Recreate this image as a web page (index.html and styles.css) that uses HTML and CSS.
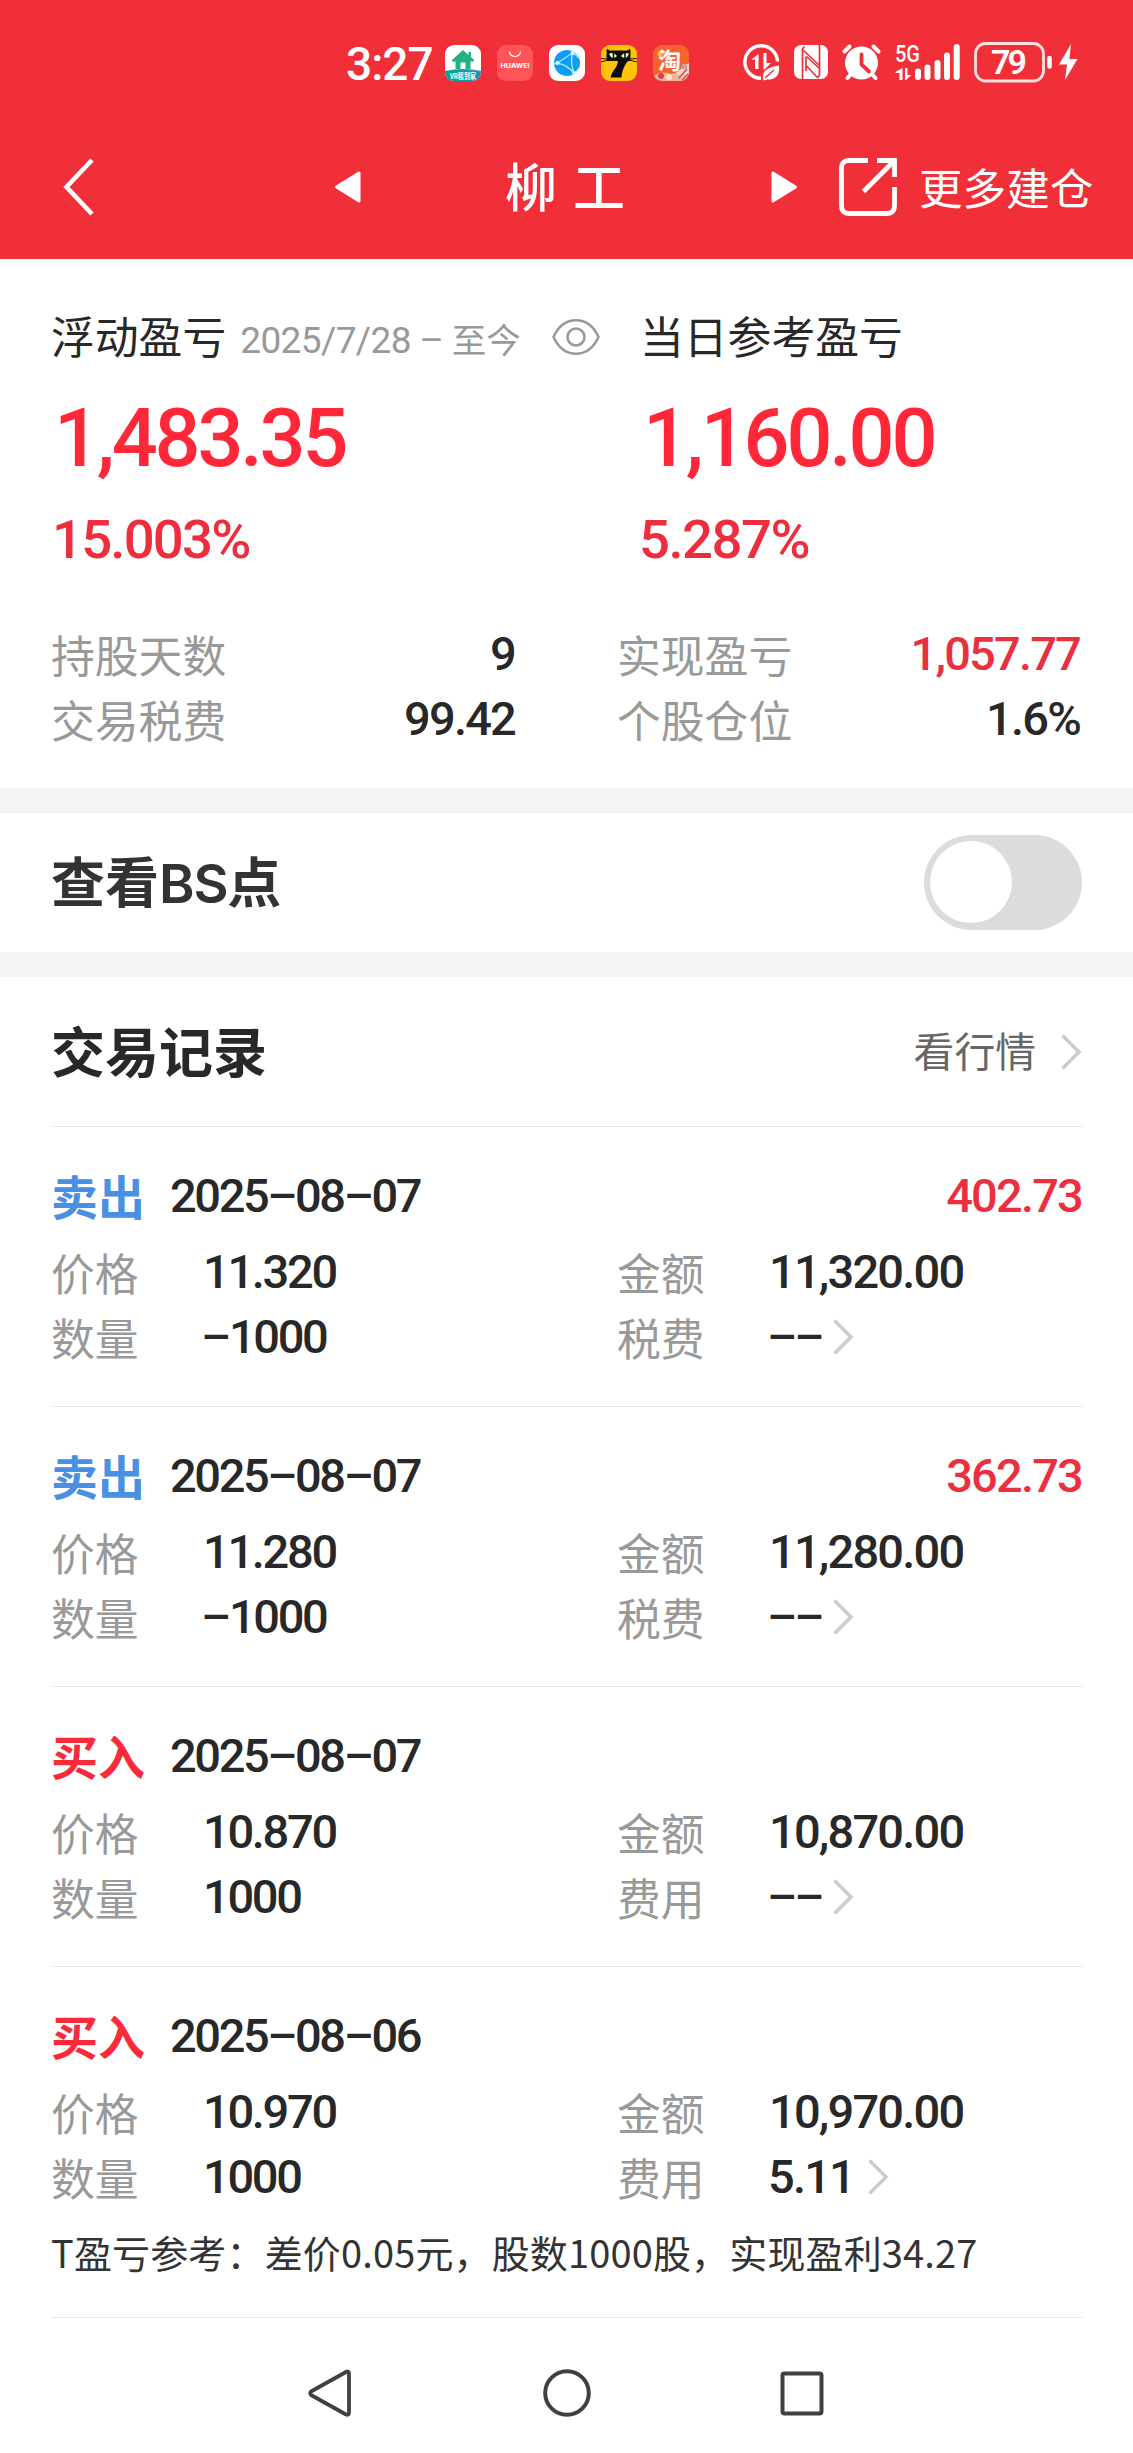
FILE: index.html
```html
<!DOCTYPE html>
<html lang="zh-CN">
<head>
<meta charset="utf-8">
<title>柳工</title>
<link rel="stylesheet" href="styles.css">
</head>
<body>
<header class="top">
  <div class="status">
    <span class="clock">3:27</span>
    <div class="apps">
      <svg width="36" height="36" viewBox="0 0 36 36">
        <defs><clipPath id="tile"><rect width="36" height="36" rx="9"/></clipPath>
        <linearGradient id="sea" x1="0" x2="1"><stop offset="0" stop-color="#08a58a"/><stop offset="1" stop-color="#1c8fc4"/></linearGradient></defs>
        <g clip-path="url(#tile)"><rect width="36" height="36" fill="#fff"/>
        <path d="M0 26Q18 22 36 26V36H0Z" fill="url(#sea)"/></g>
        <path d="M18 5L7 15V16.500H10.500V24H15.500V17.500H20.500V24H25.500V16.500H29V15L26 12V7H23.500V10Z" fill="#22b285"/>
        <text x="5" y="33.500" class="t-vr" textLength="26" lengthAdjust="spacingAndGlyphs">VR租到家</text>
      </svg>
      <svg width="36" height="36" viewBox="0 0 36 36">
        <rect width="36" height="36" rx="9" fill="#ff5558"/>
        <path d="M12.500 6.500a5.500 5 0 0 0 11 0" fill="none" stroke="#fff" stroke-width="1.200"/>
        <text x="3.500" y="23" class="t-hw" textLength="29" lengthAdjust="spacingAndGlyphs">HUAWEI</text>
      </svg>
      <svg width="36" height="36" viewBox="0 0 36 36">
        <rect width="36" height="36" rx="9" fill="#fff"/>
        <circle cx="18" cy="18" r="13" fill="#0d9df5"/>
        <path d="M8.500 18L23.500 8M8.500 18Q18 20 25 28M23.500 8Q21 18 25 28M23.500 8Q27 9 30 13M25 28Q28 27 30 23M8.500 18L5 19" fill="none" stroke="#a9e6ff" stroke-width="1.400"/>
        <g fill="#d4f4ff"><circle cx="8.500" cy="18" r="2"/><circle cx="23.500" cy="8" r="2"/><circle cx="25" cy="28" r="2"/></g>
      </svg>
      <svg width="36" height="36" viewBox="0 0 36 36">
        <rect width="36" height="36" rx="9" fill="#fdc30a"/>
        <path d="M6 4.500L9 6H26L29 4.500V15.500H6ZM0 13.500L7 14M0 17L7 15M36 13.500L28 14M36 17L28 15" fill="#0b0b0b" stroke="#0b0b0b" stroke-width=".9"/>
        <path d="M17 15H28C24 19 21 25 20.500 32.500H9.500C11 25 17 23 17 15Z" fill="#0b0b0b"/>
        <path d="M8 8.500Q13 6.500 16 11Q11 16 8 8.500ZM28 8.500Q23 6.500 20 11Q25 16 28 8.500Z" fill="#fff6c8"/>
        <path d="M12.500 8V13M24 8V13" stroke="#111" stroke-width="1.600"/>
      </svg>
      <svg width="36" height="36" viewBox="0 0 36 36">
        <g clip-path="url(#tile)"><rect width="36" height="36" fill="#f4642c"/>
        <path d="M36 18V36H12Z" fill="#fbd9d0"/><path d="M0 31Q9 25 18 29Q27 26 29 36H0Z" fill="#efb49d"/></g>
        <circle cx="7" cy="8.500" r="2.500" fill="#ffc34a"/>
        <circle cx="8" cy="31" r="3" fill="#d9434b"/><circle cx="16" cy="32" r="3" fill="#f6e7d2"/><path d="M26 33L34 24M29 35L35 29" stroke="#c9503e" stroke-width="1.500"/>
        <circle cx="31.500" cy="21.500" r="3" fill="#c7a0a0"/>
        <text x="5" y="24" class="t-tao">淘</text>
      </svg>
    </div>
    <svg class="sysicons" width="336" height="42" viewBox="742 42 336 42" fill="#fff">
      <path d="M761 78.300A16.300 16.300 0 1 1 777.500 61.500" fill="none" stroke="#fff" stroke-width="3.400"/>
      <path d="M758.500 54V69H755V59.500H751.500ZM763.500 53H766.500V63H771L764.500 69.500H763.500Z"/>
      <path d="M763 79Q761 68 779 65.500Q780.500 80 766.500 79.500L764 80.500Z"/>
      <path d="M765 78L774 70" stroke="#f12f38" stroke-width="1.500"/>
      <rect x="794" y="45" width="34" height="34" rx="7"/>
      <path d="M802.500 79V49L804.500 46.500M819.500 45V75L817.500 78M803 50L820 66M806 56.500V71M806.500 56.500L820 69M806.500 66L818 78" fill="none" stroke="#f12f38" stroke-width="1.700"/>
      <circle cx="861.500" cy="63" r="16.500"/>
      <path d="M844.500 51.500L849.500 46.500M878.500 51.500L873.500 46.500M847.500 78L851 74M875.500 78L872 74" stroke="#fff" stroke-width="4" stroke-linecap="round"/>
      <path d="M861.500 54.500V64.500L869 71.500" fill="none" stroke="#f12f38" stroke-width="3.800" stroke-linecap="round"/>
      <text x="895" y="61.500" class="t-5g" textLength="25" lengthAdjust="spacingAndGlyphs">5G</text>
      <path d="M902.500 68V80H899.500V73H895.500V72ZM905 68H907.500V75H911.500L906 80H905Z"/>
      <path d="M918 71.500V77M927.500 67.500V77M937.500 63V77M947 55.500V77M956.700 47V77" stroke="#fff" stroke-width="6" stroke-linecap="round"/>
      <rect x="975.500" y="43.500" width="68" height="37.500" rx="10" fill="none" stroke="#fff" stroke-opacity=".85" stroke-width="2.800"/>
      <path d="M1049.500 58V66.500" stroke="#fff" stroke-width="4.500" stroke-linecap="round"/>
      <text x="991" y="74" class="t-batt" textLength="36">79</text>
      <path d="M1071 44L1059 64.500H1067L1065 80L1077.500 59H1069.500Z"/>
    </svg>
  </div>
  <nav class="bar">
    <svg class="back" width="36" height="60" viewBox="0 0 36 60"><path d="M30 3L4.500 30L30 57" fill="none" stroke="#fff" stroke-width="4.600"/></svg>
    <svg class="prev" width="28" height="34" viewBox="0 0 28 34"><path d="M2.500 17L25 3V31Z" fill="#fff" stroke="#fff" stroke-width="3" stroke-linejoin="round"/></svg>
    <h1 class="stock"><span>柳</span><span>工</span></h1>
    <svg class="next" width="28" height="34" viewBox="0 0 28 34"><path d="M25.500 17L3 3V31Z" fill="#fff" stroke="#fff" stroke-width="3" stroke-linejoin="round"/></svg>
    <svg class="open" width="60" height="60" viewBox="0 0 60 60"><path d="M30 3.500H11Q3.500 3.500 3.500 11V49Q3.500 56.500 11 56.500H49Q56.500 56.500 56.500 49V30M39 3.500H56.500V20M55 5L25.500 34.500" fill="none" stroke="#fff" stroke-width="4.800"/></svg>
    <span class="more">更多建仓</span>
  </nav>
</header>

<section class="summary">
  <div class="col">
    <div class="label">浮动盈亏<span class="since"><span class="since-num">2025/7/28 – </span>至今</span>
      <svg class="eye" width="50" height="38" viewBox="0 0 50 38" fill="none" stroke="#999" stroke-width="2.600"><path d="M2.500 19C8 7 16 2.300 25 2.300S42 7 47.500 19C42 31 34 35.700 25 35.700S8 31 2.500 19Z"/><circle cx="25" cy="19" r="8.500"/></svg>
    </div>
    <div class="big">1,483.35</div>
    <div class="pct">15.003%</div>
  </div>
  <div class="col">
    <div class="label">当日参考盈亏</div>
    <div class="big">1,160.00</div>
    <div class="pct pct-day">5.287%</div>
  </div>
</section>
<section class="stats">
  <div class="stat"><span class="key">持股天数</span><span class="num">9</span></div>
  <div class="stat"><span class="key">实现盈亏</span><span class="num up">1,057.77</span></div>
  <div class="stat"><span class="key">交易税费</span><span class="num">99.42</span></div>
  <div class="stat"><span class="key">个股仓位</span><span class="num">1.6%</span></div>
</section>

<section class="bs">
  <h2 class="heading heading-bs">查看<span class="latin">BS</span>点</h2>
  <div class="toggle"><div class="knob"></div></div>
</section>

<section class="records">
  <div class="records-head">
    <h2 class="heading">交易记录</h2>
    <span class="quote">看行情</span>
    <svg class="chev" width="22" height="38" viewBox="0 0 22 38"><path d="M2.500 2.500L19 19L2.500 35.500" fill="none" stroke="#ccc" stroke-width="3.600"/></svg>
  </div>

  <article class="trade">
    <div class="trade-head"><b class="side sell">卖出</b><span class="num date">2025–08–07</span><span class="num up gain">402.73</span></div>
    <div class="fields">
      <span class="key">价格</span><span class="num price">11.320</span><span class="key">金额</span><span class="num">11,320.00</span>
      <span class="key">数量</span><span class="num qty-out">–1000</span><span class="key">税费</span><span class="num none">––<svg class="chev" width="22" height="38" viewBox="0 0 22 38"><path d="M2.500 2.500L19 19L2.500 35.500" fill="none" stroke="#ccc" stroke-width="3.600"/></svg></span>
    </div>
  </article>
  <article class="trade">
    <div class="trade-head"><b class="side sell">卖出</b><span class="num date">2025–08–07</span><span class="num up gain">362.73</span></div>
    <div class="fields">
      <span class="key">价格</span><span class="num price">11.280</span><span class="key">金额</span><span class="num">11,280.00</span>
      <span class="key">数量</span><span class="num qty-out">–1000</span><span class="key">税费</span><span class="num none">––<svg class="chev" width="22" height="38" viewBox="0 0 22 38"><path d="M2.500 2.500L19 19L2.500 35.500" fill="none" stroke="#ccc" stroke-width="3.600"/></svg></span>
    </div>
  </article>
  <article class="trade">
    <div class="trade-head"><b class="side buy">买入</b><span class="num date">2025–08–07</span></div>
    <div class="fields">
      <span class="key">价格</span><span class="num price">10.870</span><span class="key">金额</span><span class="num">10,870.00</span>
      <span class="key">数量</span><span class="num price">1000</span><span class="key">费用</span><span class="num none">––<svg class="chev" width="22" height="38" viewBox="0 0 22 38"><path d="M2.500 2.500L19 19L2.500 35.500" fill="none" stroke="#ccc" stroke-width="3.600"/></svg></span>
    </div>
  </article>
  <article class="trade trade-last">
    <div class="trade-head"><b class="side buy">买入</b><span class="num date">2025–08–06</span></div>
    <div class="fields">
      <span class="key">价格</span><span class="num price">10.970</span><span class="key">金额</span><span class="num">10,970.00</span>
      <span class="key">数量</span><span class="num price">1000</span><span class="key">费用</span><span class="num fee">5.11<svg class="chev" width="22" height="38" viewBox="0 0 22 38"><path d="M2.500 2.500L19 19L2.500 35.500" fill="none" stroke="#ccc" stroke-width="3.600"/></svg></span>
    </div>
    <p class="note">T盈亏参考：差价0.05元，股数1000股，实现盈利34.27</p>
  </article>
</section>

<footer class="sysnav">
  <svg width="50" height="50" viewBox="0 0 50 50"><path d="M4 23.500Q2.500 25.300 4 27L39 46.500Q42 47.500 42 44.500V5.500Q42 2.500 39 4Z" fill="none" stroke="#404040" stroke-width="3.800" stroke-linejoin="round"/></svg>
  <svg width="50" height="50" viewBox="0 0 50 50"><circle cx="25" cy="25" r="21.800" fill="none" stroke="#404040" stroke-width="4"/></svg>
  <svg width="50" height="50" viewBox="0 0 50 50"><rect x="5.500" y="5.500" width="39" height="40" rx="2" fill="none" stroke="#404040" stroke-width="4"/></svg>
</footer>
</body>
</html>
```
FILE: styles.css
```css
* { box-sizing: border-box; margin: 0; padding: 0; }

body {
  width: 1133px;
  min-height: 2453px;
  background: #fff;
  color: #282828;
  font-family: "Noto Sans CJK SC", sans-serif;
}

svg { display: block; flex: none; overflow: visible; }

/* top bar */
.top { height: 259px; background: #f12f38; color: #fff; }
.status { display: flex; align-items: center; height: 124px; padding: 2px 55px 0 346px; }
.clock { width: 99px; padding-top: 2px; font: 500 46px/60px Roboto, sans-serif; letter-spacing: -1px; white-space: nowrap; }
.apps { display: flex; gap: 16px; }
.sysicons { margin-left: 53px; margin-top: -1px; }
.t-vr { font: 700 7.500px "Noto Sans CJK SC", sans-serif; fill: #fff; }
.t-hw { font: 700 6.500px Inter, sans-serif; fill: #fff; }
.t-tao { font: 700 23px "Noto Sans CJK SC", sans-serif; fill: #fff; }
.t-5g { font: 500 23px Roboto, sans-serif; }
.t-batt { font: 600 34px Roboto, sans-serif; }

.bar { display: flex; align-items: center; height: 126px; padding-left: 62px; }
.prev { margin-left: 236px; }
.stock {
  display: flex;
  gap: 16px;
  margin-left: 143px;
  font-size: 52px;
  font-weight: 500;
  line-height: 70px;
  padding-bottom: 5px;
}
.next { margin-left: 145px; }
.open { margin-left: 40px; }
.more { margin-left: 21px; margin-bottom: 3px; font-size: 43.600px; line-height: 60px; white-space: nowrap; }

/* profit summary */
.summary { display: grid; grid-template-columns: 589px 1fr; padding: 46px 0 0 51px; height: 311px; }
.label { display: flex; align-items: center; height: 60px; font-size: 43.800px; line-height: 60px; }
.since { margin-left: 14px; color: #999; font-size: 34.500px; padding-top: 8px; white-space: pre; }
.since-num { font-family: Roboto, sans-serif; font-size: 37px; letter-spacing: -0.600px; }
.eye { margin: 3px 0 0 30px; }
.big { margin: 22px 0 18px 3px; font: 500 81px/104px Roboto, sans-serif; letter-spacing: -3.200px; color: #ff2738; }
.pct { margin-left: 1px; font: 500 54.500px/60px Roboto, sans-serif; letter-spacing: -1.800px; color: #ee2e3d; }
.pct-day { margin-left: -1px; letter-spacing: -1.500px; }

.key { color: #999; font-size: 43.800px; white-space: nowrap; }
.num {
  display: flex;
  align-items: center;
  font-family: Roboto, sans-serif;
  font-weight: 500;
  font-size: 47px;
  letter-spacing: -1.800px;
  white-space: nowrap;
}
.up { color: #ec2f3e; }

.stats {
  display: grid;
  grid-template-columns: 464px 463px;
  column-gap: 102px;
  height: 218px;
  padding: 51px 51px 37px;
}
.stat { display: flex; justify-content: space-between; height: 65px; line-height: 66px; }

/* chart marker switch */
.bs {
  display: flex;
  align-items: center;
  justify-content: space-between;
  height: 189px;
  padding: 0 51px;
  border: solid #f4f4f4;
  border-width: 25px 0;
}
.heading { font-size: 54px; font-weight: 700; line-height: 70px; padding-bottom: 4px; }
.heading-bs { padding-bottom: 1px; color: #333; }
.latin { font-family: Inter, sans-serif; font-weight: 600; letter-spacing: -1.200px; }
.toggle { width: 158px; height: 95px; padding: 6px; border-radius: 48px; background: #dcdcdc; }
.knob { width: 82px; height: 82px; border-radius: 50%; background: #fff; }

/* trade list */
.records { padding: 0 51px; }
.records-head { display: flex; align-items: center; height: 150px; border-bottom: 1px solid #e8e8e8; }
.records-head .chev { margin-left: 24px; }
.quote { margin-left: auto; font-size: 40.800px; color: #666; padding-bottom: 4px; }
.trade { height: 280px; padding-top: 32px; border-bottom: 1px solid #e8e8e8; }
.trade-last { height: 351px; }
.trade-head { display: flex; align-items: center; height: 72px; margin-bottom: 8px; }
.side { width: 119px; font-size: 47px; line-height: 72px; }
.sell { color: #4a90e2; }
.buy { color: #f92a3a; }
.date { letter-spacing: -2.400px; }
.gain { margin-left: auto; }
.fields { display: grid; grid-template-columns: 152px 414px 152px 1fr; grid-auto-rows: 65px; line-height: 66px; }
.fields .chev { margin-left: 13px; }
.price { letter-spacing: -2.300px; }
.qty-out { margin-left: -2px; letter-spacing: -2.300px; }
.none { margin-left: -2px; letter-spacing: -3px; }
.none .chev { margin-left: 11px; }
.fee { margin-left: -1px; }
.note { font-size: 38px; line-height: 86px; letter-spacing: 0.150px; color: #333; white-space: nowrap; }

/* system navigation */
.sysnav { display: flex; justify-content: center; gap: 185px; height: 134px; padding-top: 50px; }
```
